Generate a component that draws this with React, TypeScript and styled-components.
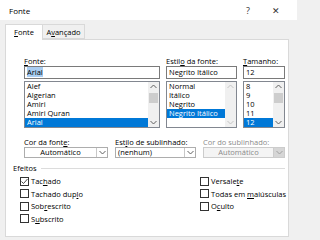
import React from 'react'
import styled, { createGlobalStyle } from 'styled-components'

const GlobalStyle = createGlobalStyle`
  html, body {
    margin: 0;
    padding: 0;
    background: #f0f0f0;
  }
  body {
    font-family: "Open Sans", "Noto Sans", sans-serif;
    font-size: 7.5px;
    color: #000;
  }
  u {
    text-decoration: underline;
    text-underline-offset: 1px;
    text-decoration-thickness: 0.6px;
  }
`

const Window = styled.div`
  width: 297px;
  height: 237px;
  overflow: hidden;
  background: #f0f0f0;
  display: flex;
  flex-direction: column;
`

const TitleBar = styled.div`
  height: 20px;
  flex-shrink: 0;
  background: #fff;
  display: flex;
  align-items: center;
  padding: 0 7px 0 9px;
`

const Title = styled.span`
  flex: 1;
  font-size: 8px;
`

const TitleButton = styled.span`
  width: 28px;
  text-align: center;
  font-size: 9px;
  color: #333;
`

const Body = styled.div`
  flex: 1;
  display: flex;
  flex-direction: column;
  padding: 4px 8px 0 5px;
`

const TabStrip = styled.div`
  height: 15px;
  display: flex;
  align-items: flex-end;
  position: relative;
  z-index: 1;
`

const Tab = styled.div<{ $active?: boolean; $width: number }>`
  width: ${p => p.$width}px;
  height: ${p => (p.$active ? 16 : 15)}px;
  box-sizing: border-box;
  margin-bottom: ${p => (p.$active ? -1 : 0)}px;
  margin-left: ${p => (p.$active ? 0 : -1)}px;
  border: 1px solid #d9d9d9;
  border-bottom: ${p => (p.$active ? 'none' : '1px solid #d9d9d9')};
  background: ${p => (p.$active ? '#fff' : '#f0f0f0')};
  display: flex;
  align-items: center;
  justify-content: center;
  padding-bottom: ${p => (p.$active ? 1 : 0)}px;
`

const Panel = styled.div`
  flex: 1;
  background: #fff;
  border: 1px solid #d9d9d9;
  padding: 17px 3px 0 7px;
`

const TopGrid = styled.div`
  display: grid;
  grid-template-columns: 136px 71px 42px;
  column-gap: 6px;
  padding-left: 11px;
`

const Field = styled.div`
  display: flex;
  flex-direction: column;
`

const Label = styled.div<{ $disabled?: boolean }>`
  height: 9px;
  line-height: 9px;
  white-space: nowrap;
  color: ${p => (p.$disabled ? '#8a8a8a' : '#000')};
`

const TextBox = styled.div`
  height: 13px;
  box-sizing: border-box;
  border: 1px solid #7a7a7a;
  line-height: 11px;
  padding-left: 2px;
  white-space: nowrap;
`

const Selection = styled.span`
  background: #a9cdf1;
`

const ListBox = styled.div`
  margin-top: 2px;
  height: 47px;
  box-sizing: border-box;
  border: 1px solid #828790;
  display: flex;
  overflow: hidden;
`

const Items = styled.div`
  flex: 1;
  display: flex;
  flex-direction: column;
  min-width: 0;
`

const Item = styled.div<{ $selected?: boolean }>`
  height: 9px;
  line-height: 9px;
  padding-left: 2px;
  white-space: nowrap;
  background: ${p => (p.$selected ? '#0078d7' : 'transparent')};
  color: ${p => (p.$selected ? '#fff' : '#000')};
`

const ScrollBar = styled.div`
  width: 11px;
  background: #f0f0f0;
  display: flex;
  flex-direction: column;
  align-items: center;
`

const ScrollArrow = styled.div`
  height: 9px;
  width: 11px;
  display: flex;
  align-items: center;
  justify-content: center;
`

const ScrollTrack = styled.div`
  flex: 1;
  width: 9px;
  padding-top: 2px;
`

const Thumb = styled.div`
  height: 10px;
  background: #cdcdcd;
`

const DropRow = styled.div`
  display: grid;
  grid-template-columns: 84px 81px 82px;
  column-gap: 7px;
  padding-left: 11px;
  margin-top: 10px;
`

const DropDown = styled.div<{ $disabled?: boolean }>`
  height: 11px;
  box-sizing: border-box;
  border: 1px solid ${p => (p.$disabled ? '#cccccc' : '#adadad')};
  background: ${p => (p.$disabled ? '#f4f4f4' : '#fff')};
  display: flex;
  color: ${p => (p.$disabled ? '#8a8a8a' : '#000')};
`

const DropText = styled.div<{ $center?: boolean }>`
  flex: 1;
  line-height: 9px;
  padding-left: ${p => (p.$center ? 0 : 2)}px;
  text-align: ${p => (p.$center ? 'center' : 'left')};
  white-space: nowrap;
`

const DropButton = styled.div<{ $disabled?: boolean }>`
  width: 10px;
  border-left: 1px solid ${p => (p.$disabled ? '#cccccc' : '#c8c8c8')};
  background: ${p => (p.$disabled ? '#d6d6d6' : '#fff')};
  display: flex;
  align-items: center;
  justify-content: center;
`

const Effects = styled.div`
  margin-top: 6px;
`

const GroupHeading = styled.div`
  display: flex;
  align-items: center;
  gap: 4px;
  height: 9px;
  line-height: 9px;
  &::after {
    content: '';
    flex: 1;
    height: 1px;
    background: #dcdcdc;
  }
`

const EffectColumns = styled.div`
  display: grid;
  grid-template-columns: 180px 1fr;
  padding-left: 7px;
  margin-top: 2px;
`

const CheckList = styled.div`
  display: flex;
  flex-direction: column;
`

const CheckRow = styled.div`
  height: 12.5px;
  display: flex;
  align-items: center;
  gap: 2px;
  white-space: nowrap;
`

const Box = styled.div`
  width: 9px;
  height: 9px;
  box-sizing: border-box;
  border: 1px solid #333;
  background: #fff;
  display: flex;
  align-items: center;
  justify-content: center;
`

const Chevron = ({ up, color }: { up?: boolean; color: string }) => (
  <svg width="7" height="5" viewBox="0 0 7 5">
    <polyline
      points={up ? '0.5,4 3.5,1 6.5,4' : '0.5,1 3.5,4 6.5,1'}
      fill="none"
      stroke={color}
      strokeWidth="1"
    />
  </svg>
)

const Check = ({ label, checked }: { label: React.ReactNode; checked?: boolean }) => (
  <CheckRow>
    <Box>
      {checked && (
        <svg width="7" height="7" viewBox="0 0 7 7">
          <polyline points="0.5,3.5 2.5,5.5 6.5,1" fill="none" stroke="#333" strokeWidth="0.9" />
        </svg>
      )}
    </Box>
    <span>{label}</span>
  </CheckRow>
)

interface ListProps {
  items: string[]
  selected: number
  thumb?: boolean
}

const List = ({ items, selected, thumb }: ListProps) => {
  const arrow = thumb ? '#606060' : '#c4c4c4'
  return (
    <ListBox>
      <Items>
        {items.map((item, i) => (
          <Item key={item} $selected={i === selected}>
            {item}
          </Item>
        ))}
      </Items>
      <ScrollBar>
        <ScrollArrow>
          <Chevron up color={arrow} />
        </ScrollArrow>
        <ScrollTrack>{thumb && <Thumb />}</ScrollTrack>
        <ScrollArrow>
          <Chevron color={arrow} />
        </ScrollArrow>
      </ScrollBar>
    </ListBox>
  )
}

const fontNames = ['Alef', 'Algerian', 'Amiri', 'Amiri Quran', 'Arial']
const styleNames = ['Normal', 'Itálico', 'Negrito', 'Negrito Itálico']
const sizes = ['8', '9', '10', '11', '12']

export default function App() {
  return (
    <>
      <GlobalStyle />
      <Window>
        <TitleBar>
          <Title>Fonte</Title>
          <TitleButton>?</TitleButton>
          <TitleButton>✕</TitleButton>
        </TitleBar>
        <Body>
          <TabStrip>
            <Tab $active $width={38}>
              <span>
                <u>F</u>onte
              </span>
            </Tab>
            <Tab $width={43}>
              <span>
                A<u>v</u>ançado
              </span>
            </Tab>
          </TabStrip>
          <Panel>
            <TopGrid>
              <Field>
                <Label>
                  <u>F</u>onte:
                </Label>
                <TextBox>
                  <Selection>Arial</Selection>
                </TextBox>
                <List items={fontNames} selected={4} thumb />
              </Field>
              <Field>
                <Label>
                  Estil<u>o</u> da fonte:
                </Label>
                <TextBox>Negrito Itálico</TextBox>
                <List items={styleNames} selected={3} />
              </Field>
              <Field>
                <Label>
                  <u>T</u>amanho:
                </Label>
                <TextBox>12</TextBox>
                <List items={sizes} selected={4} thumb />
              </Field>
            </TopGrid>
            <DropRow>
              <Field>
                <Label>
                  Cor da font<u>e</u>:
                </Label>
                <DropDown>
                  <DropText $center>Automático</DropText>
                  <DropButton>
                    <Chevron color="#606060" />
                  </DropButton>
                </DropDown>
              </Field>
              <Field>
                <Label>
                  Est<u>i</u>lo de sublinhado:
                </Label>
                <DropDown>
                  <DropText>(nenhum)</DropText>
                  <DropButton>
                    <Chevron color="#606060" />
                  </DropButton>
                </DropDown>
              </Field>
              <Field>
                <Label $disabled>Cor do sublinhado:</Label>
                <DropDown $disabled>
                  <DropText $center>Automático</DropText>
                  <DropButton $disabled>
                    <Chevron color="#a0a0a0" />
                  </DropButton>
                </DropDown>
              </Field>
            </DropRow>
            <Effects>
              <GroupHeading>Efeitos</GroupHeading>
              <EffectColumns>
                <CheckList>
                  <Check checked label={<>Tac<u>h</u>ado</>} />
                  <Check label={<>Tachado dup<u>l</u>o</>} />
                  <Check label={<>Sob<u>r</u>escrito</>} />
                  <Check label={<>S<u>u</u>bscrito</>} />
                </CheckList>
                <CheckList>
                  <Check label={<>Versale<u>t</u>e</>} />
                  <Check label={<>Todas em <u>m</u>aiúsculas</>} />
                  <Check label={<>O<u>c</u>ulto</>} />
                </CheckList>
              </EffectColumns>
            </Effects>
          </Panel>
        </Body>
      </Window>
    </>
  )
}
